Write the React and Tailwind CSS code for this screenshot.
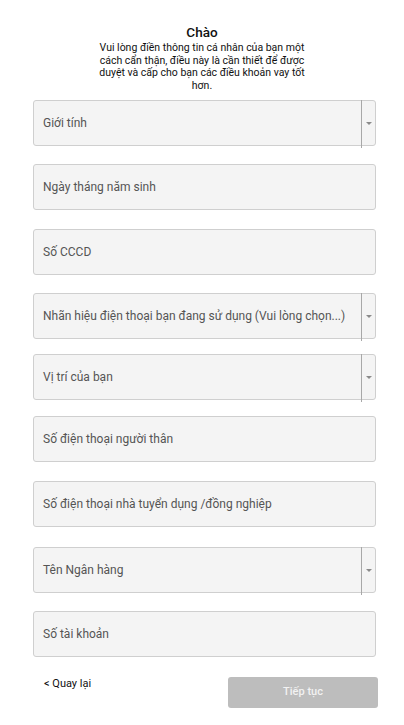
import React from "react";

const fields = [
  { label: "Giới tính", select: true, mt: "mt-0" },
  { label: "Ngày tháng năm sinh", mt: "mt-[18px]" },
  { label: "Số CCCD", mt: "mt-[19px]" },
  { label: "Nhãn hiệu điện thoại bạn đang sử dụng (Vui lòng chọn...)", select: true, mt: "mt-[18px]" },
  { label: "Vị trí của bạn", select: true, mt: "mt-[15px]" },
  { label: "Số điện thoại người thân", mt: "mt-[16px]" },
  { label: "Số điện thoại nhà tuyển dụng /đồng nghiệp", mt: "mt-[19px]" },
  { label: "Tên Ngân hàng", select: true, mt: "mt-[20px]" },
  { label: "Số tài khoản", mt: "mt-[18px]" },
];

function Field({ label, select, mt }) {
  return (
    <div className={`${mt} relative h-[46px] w-[343px] rounded-[3px] border border-[#cfcfcf] bg-[#f4f4f4] flex items-center`}>
      <span className="pl-[9px] text-[12px] text-[#555555] leading-none whitespace-nowrap">{label}</span>
      {select && (
        <>
          <div className="absolute left-[327px] top-[-1px] h-[48px] w-px bg-[#a8a8a8]" />
          <div className="absolute left-[332px] top-[21px] h-0 w-0 border-l-[3px] border-r-[3px] border-t-[3px] border-l-transparent border-r-transparent border-t-[#8a8a8a]" />
        </>
      )}
    </div>
  );
}

export default function App() {
  return (
    <div className="w-[404px] h-[725px] bg-white" style={{ fontFamily: "Roboto, 'Noto Sans', sans-serif" }}>
      <div className="flex flex-col items-center pt-[24px]">
        <h1 className="text-[13.5px] font-medium text-[#111] leading-[17px]">Chào</h1>
        <p className="mt-[1px] text-[10.5px] leading-[12.5px] text-[#111] text-center">
          Vui lòng điền thông tin cá nhân của bạn một
          <br />
          cách cẩn thận, điều này là cần thiết để được
          <br />
          duyệt và cấp cho bạn các điều khoản vay tốt
          <br />
          hơn.
        </p>
      </div>
      <div className="pl-[33px] mt-[8px]">
        {fields.map((f, i) => (
          <Field key={i} {...f} />
        ))}
      </div>
      <div className="flex items-start pl-[44px] mt-[20px]">
        <span className="text-[11px] text-[#111] leading-none mt-[1px]">&lt; Quay lại</span>
        <button className="ml-auto mr-[26px] h-[31px] w-[150px] rounded-[3px] bg-[#bdbdbd] text-[11px] font-medium text-[#f2f2f2]">
          Tiếp tục
        </button>
      </div>
    </div>
  );
}
